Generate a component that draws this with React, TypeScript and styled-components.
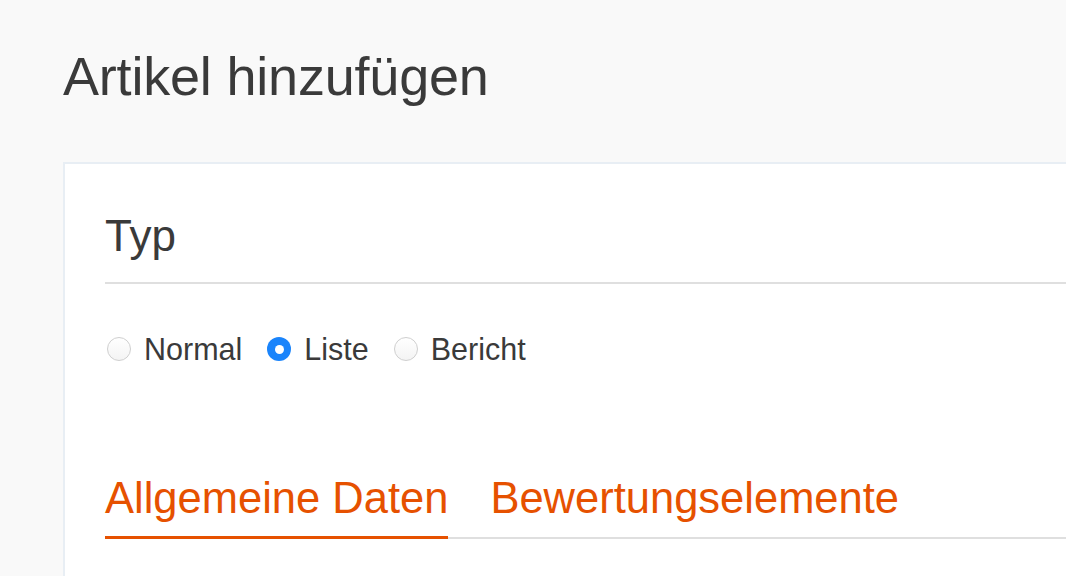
import styled, { createGlobalStyle } from "styled-components";

const GlobalStyle = createGlobalStyle`
    html, body {
        margin: 0;
        padding: 0;
        background: #f9f9f9;
        overflow: hidden;
    }
    body {
        font-family: "Liberation Sans", Arial, sans-serif;
        color: #3a3a3a;
    }
`;

const Page = styled.div`
    width: 1066px;
    height: 576px;
    padding: 44px 0 0 63px;
    box-sizing: border-box;
    display: flex;
    flex-direction: column;
    gap: 54px;
    overflow: hidden;
`;

const PageTitle = styled.h1`
    margin: 0;
    font-size: 54px;
    font-weight: 400;
    line-height: 64px;
    letter-spacing: -0.2px;
`;

const Card = styled.div`
    width: 1100px;
    flex: 1;
    background: #ffffff;
    border: 2px solid #e8eef4;
    border-right: none;
    border-bottom: none;
    padding: 46px 0 0 40px;
    box-sizing: border-box;
    display: flex;
    flex-direction: column;
`;

const SectionTitle = styled.h2`
    margin: 0;
    font-size: 44px;
    font-weight: 400;
    line-height: 52px;
    padding-bottom: 20px;
    border-bottom: 2px solid #dfdfdf;
`;

const RadioGroup = styled.div`
    display: flex;
    align-items: center;
    gap: 25px;
    margin-top: 48px;
    padding-left: 2px;
`;

const RadioLabel = styled.label`
    display: flex;
    align-items: center;
    gap: 13px;
    font-size: 30.5px;
    line-height: 34px;
`;

const RadioCircle = styled.span<{ $checked?: boolean }>`
    width: 24px;
    height: 24px;
    border-radius: 50%;
    box-sizing: border-box;
    display: inline-flex;
    align-items: center;
    justify-content: center;
    background: ${(p) => (p.$checked ? "#1a84fb" : "linear-gradient(#ffffff, #f4f4f4)")};
    border: ${(p) => (p.$checked ? "none" : "1px solid #cfcfcf")};

    &::after {
        content: "";
        display: ${(p) => (p.$checked ? "block" : "none")};
        width: 9px;
        height: 9px;
        border-radius: 50%;
        background: #ffffff;
    }
`;

const Tabs = styled.div`
    display: flex;
    gap: 42px;
    margin-top: 107px;
    border-bottom: 2px solid #dfdfdf;
`;

const Tab = styled.div<{ $active?: boolean }>`
    font-size: 43.5px;
    line-height: 50px;
    color: #e65100;
    padding-bottom: 13px;
    margin-bottom: -2px;
    border-bottom: 3px solid ${(p) => (p.$active ? "#e65100" : "transparent")};
`;

const types = [
    { label: "Normal", checked: false },
    { label: "Liste", checked: true },
    { label: "Bericht", checked: false },
];

function App() {
    return (
        <>
            <GlobalStyle />
            <Page>
                <PageTitle>Artikel hinzufügen</PageTitle>
                <Card>
                    <SectionTitle>Typ</SectionTitle>
                    <RadioGroup>
                        {types.map((t) => (
                            <RadioLabel key={t.label}>
                                <RadioCircle $checked={t.checked} />
                                {t.label}
                            </RadioLabel>
                        ))}
                    </RadioGroup>
                    <Tabs>
                        <Tab $active>Allgemeine Daten</Tab>
                        <Tab>Bewertungselemente</Tab>
                    </Tabs>
                </Card>
            </Page>
        </>
    );
}

export default App;
